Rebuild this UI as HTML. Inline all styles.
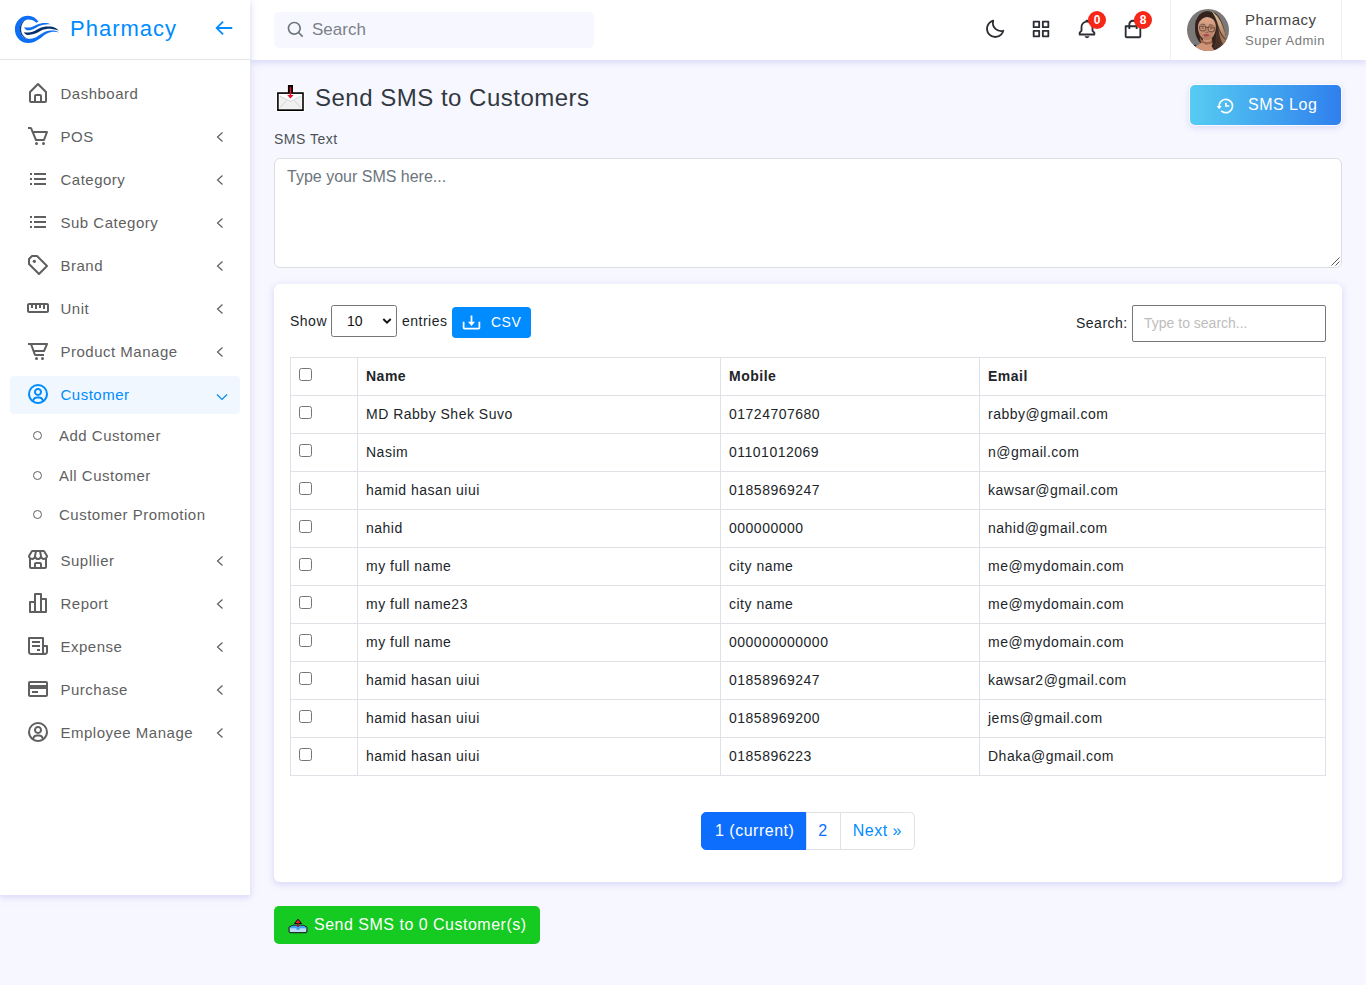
<!DOCTYPE html>
<html lang="en">
<head>
<meta charset="utf-8">
<title>Send SMS to Customers</title>
<style>
*{box-sizing:border-box;}
html,body{margin:0;padding:0;}
body{width:1366px;height:985px;overflow:hidden;background:#f7f7ff;font-family:"Liberation Sans",sans-serif;font-size:14px;letter-spacing:.5px;color:#4c5258;position:relative;}
svg{display:block;}
/* ---------- sidebar ---------- */
.sidebar{position:absolute;left:0;top:0;width:250px;height:895px;background:#fff;box-shadow:0 2px 6px 0 rgba(218,218,253,.65),0 2px 6px 0 rgba(206,206,238,.54);z-index:5;}
.sb-head{position:absolute;left:0;top:0;width:250px;height:60px;border-bottom:1px solid #e4e4e4;}
.logo{position:absolute;left:10px;top:10px;}
.logo-text{position:absolute;left:70px;top:15px;font-size:22px;line-height:28px;letter-spacing:1px;color:#008cff;}
.toggle{position:absolute;left:212.800px;top:17.400px;}
.menu{position:absolute;left:0;top:72px;width:250px;margin:0;padding:0;list-style:none;}
.mi{position:absolute;left:10px;width:230px;height:38px;border-radius:4px;color:#5f5f5f;font-size:15px;}
.mi .ic{position:absolute;left:16px;top:5.600px;width:24px;height:24px;fill:#5f5f5f;}
.mi .tx{position:absolute;left:50.500px;top:9px;line-height:20px;white-space:nowrap;}
.mi .ch{position:absolute;left:204px;top:13px;width:12px;height:12px;}
.mi.active{background:#f0f7ff;color:#008cff;}
.mi.active .ic{fill:#008cff;}
.si{position:absolute;left:10px;width:230px;height:38px;color:#5f5f5f;font-size:15px;}
.si i{position:absolute;left:23px;top:14px;width:9px;height:9px;border:1.800px solid #5f5f5f;border-radius:50%;}
.si .tx{position:absolute;left:49px;top:9px;line-height:20px;white-space:nowrap;}
/* ---------- topbar ---------- */
.topbar{position:absolute;left:250px;top:0;width:1116px;height:60px;background:#fff;box-shadow:0 2px 6px 0 rgba(218,218,253,.65),0 2px 6px 0 rgba(206,206,238,.54);z-index:4;}
.search{position:absolute;left:24px;top:12px;width:320px;height:36px;background:#f7f7ff;border-radius:5px;}
.search svg{position:absolute;left:12.100px;top:7.800px;fill:#6c757d;}
.search span{position:absolute;left:38px;top:7px;font-size:17px;line-height:22px;color:#7b8188;letter-spacing:0;}
.tic{position:absolute;top:18.400px;width:22px;height:22px;fill:#2a2d33;}
.badge{position:absolute;top:11px;width:18px;height:18px;border-radius:50%;background:#f62718;color:#fff;font-size:12px;font-weight:bold;line-height:18px;text-align:center;letter-spacing:0;}
.userbox{position:absolute;left:920px;top:0;width:172px;height:60px;border-left:1px solid #f0f0f0;border-right:1px solid #f0f0f0;}
.avatar{position:absolute;left:16px;top:9px;width:42px;height:42px;border-radius:50%;overflow:hidden;}
.uname{position:absolute;left:74px;top:10px;font-size:15px;line-height:20px;color:#444;}
.urole{position:absolute;left:74px;top:32px;font-size:13px;line-height:18px;color:#787878;}
/* ---------- content ---------- */
.content{position:absolute;left:274px;top:60px;width:1068px;}
.title{position:absolute;left:41px;top:22px;font-size:24px;line-height:32px;color:#32393f;white-space:nowrap;letter-spacing:.5px;}
.emo{position:absolute;left:-2px;top:20px;}
.smslog{position:absolute;left:916px;top:25px;width:151px;height:40px;border-radius:5px;background:linear-gradient(to right,#56ccf2,#2f80ed);color:#fff;font-size:16px;box-shadow:0 0 0 1px rgba(255,255,255,.75),0 2px 6px 0 rgba(218,218,253,.65),0 2px 6px 0 rgba(206,206,238,.54);}
.smslog svg{position:absolute;left:24.500px;top:10.500px;fill:#fff;}
.smslog span{position:absolute;left:58px;top:9px;line-height:22px;white-space:nowrap;}
.lbl{position:absolute;left:0;top:70px;font-size:14px;line-height:18px;color:#4c5258;}
.ta{position:absolute;left:0;top:98px;width:1068px;height:110px;background:#fff;border:1px solid #dcdee2;border-radius:6px;}
.ta span{position:absolute;left:12px;top:7px;font-size:16px;line-height:22px;color:#6c757d;letter-spacing:0;}
.ta svg{position:absolute;right:1px;bottom:1px;}
.card{position:absolute;left:0;top:224px;width:1068px;height:598px;background:#fff;border-radius:6px;box-shadow:0 2px 6px 0 rgba(218,218,253,.65),0 2px 6px 0 rgba(206,206,238,.54);}
.t14{font-size:14px;color:#212529;line-height:18px;position:absolute;white-space:nowrap;}
.sel{position:absolute;left:57px;top:21px;width:66px;height:32px;border:1px solid #767676;border-radius:2.500px;background:#fff;}
.sel span{position:absolute;left:15px;top:6px;font-size:14px;line-height:18px;color:#111;letter-spacing:0;}
.sel svg{position:absolute;left:49px;top:8.800px;}
.csv{position:absolute;left:178px;top:23px;width:79px;height:31px;border-radius:4px;background:#008cff;color:#fff;font-size:14px;}
.csv svg{position:absolute;left:9px;top:5px;}
.csv span{position:absolute;left:39px;top:6px;line-height:18px;}
.sinput{position:absolute;left:858px;top:21px;width:194px;height:37px;border:1px solid #767676;border-radius:2px;background:#fff;}
.sinput span{position:absolute;left:11px;top:8px;font-size:14px;line-height:18px;color:#bdbdbd;letter-spacing:0;}
table{position:absolute;left:16px;top:73px;width:1035px;border-collapse:collapse;font-size:14px;color:#212529;table-layout:fixed;}
td,th{border:1px solid #dee2e6;height:38px;padding:0 8px 2px 8px;text-align:left;vertical-align:middle;white-space:nowrap;font-weight:normal;}
th{font-weight:bold;}
.cb{display:block;width:13px;height:13px;border:1px solid #767676;border-radius:2.5px;background:#fff;margin:-2px 0 0 0;}
.pager{position:absolute;left:427px;top:528px;height:38px;display:flex;font-size:16px;letter-spacing:.5px;}
.pager div{height:38px;line-height:36px;padding:0 12px;border:1px solid #dee2e6;margin-left:-1px;color:#0d6efd;background:#fff;white-space:nowrap;}
.pager div.cur{background:#0d6efd;border-color:#0d6efd;color:#fff;border-radius:5px 0 0 5px;margin-left:0;padding-left:13px;}
.pager div.two{padding-left:11px;}
.pager div.last{border-radius:0 5px 5px 0;}
.send{position:absolute;left:0;top:846px;width:266px;height:38px;border-radius:5px;background:#15ca20;color:#fff;font-size:16px;}
.send svg{position:absolute;left:8px;top:4px;}
.send span{position:absolute;left:40px;top:8px;line-height:22px;white-space:nowrap;}
</style>
</head>
<body>
<!-- SIDEBAR -->
<div class="sidebar">
  <div class="sb-head">
    <svg class="logo" width="56" height="40" viewBox="0 0 56 40">
      <path d="M28.500 11.700C26 7.800 22.300 5.700 18 5.700 10.600 5.700 4.900 11.700 4.900 19.300 4.900 27 10.600 33 18 33c4.900 0 8.600-2 12.700-5.100 2.900-2.300 4.500-3.900 6.200-4.500 3.600-1.900 8.500-2.200 12.700-.900-2.700-1.700-6.100-2.300-8.600-2-3.800.100-6.800 1.500-10.300 3.700-3.100 2.100-6.700 4.700-12.200 4.700-4.900 0-8.700-4-8.700-9.600 0-5.500 3.700-9.700 8.200-9.700 3.300 0 6.200 1.200 8.200 3.100z" fill="#0d6ff5"/>
      <path d="M19.500 28.900C13.800 29.100 9.700 24.900 9.700 19.300c0-4.600 2.600-8.400 6.500-9.500-3.100 1.600-5.100 5-5.100 9.500 0 5.200 3.600 9.200 8.400 9.600z" fill="#073b86"/>
      <path d="M14.100 17.200c1.200 2.300 2.500 3.100 4.400 3.100 2.200 0 4.100-.700 6.100-1.800 2.200-1.200 4-2.400 6.100-3.100 1.800-.600 3.600-.900 5.400-1 1.500-.100 2.900-.100 4.300 0-1-.700-2.200-1.100-3.500-1.300-1.300-.100-2.700-.100-4.100 0-1.400.200-2.800.500-4.100 1-1.400.500-2.700 1.100-4.100 1.700-1.500.700-3 1.300-4.600 1.600-1.900.300-3.900.200-5.900-.200z" fill="#0d6ff5"/>
      <path d="M13.900 22.300c1.100 2.100 2.400 2.800 4.100 2.700 2.400-.100 4.500-.500 6.600-1.200 2.200-.800 4.200-2 6.100-3.100 2-1.100 4-1.600 6.200-1.800 2.100-.100 4.100 0 6.100.300 2 .300 4 .700 5.800 1.300-1.100-1.200-2.300-2.100-3.700-2.700-1.300-.600-2.700-1-4.100-1.200-1.700-.200-3.500-.200-5.300 0-1.700.200-3.400.600-5.100 1.200-2.100.800-4.100 2-6.100 3.100-1.800.900-3.600 1.400-5.500 1.600-1.700.100-3.400.100-5.100-.200z" fill="#04306e"/>
    </svg>
    <div class="logo-text">Pharmacy</div>
    <svg class="toggle" width="22" height="22" viewBox="0 0 24 24" fill="#008cff"><path d="M21 11H6.414l5.293-5.293-1.414-1.414L2.586 12l7.707 7.707 1.414-1.414L6.414 13H21z"/></svg>
  </div>
  <div class="mi" style="top:75px;"><svg class="ic" viewBox="0 0 24 24"><path d="M5 22h14a2 2 0 0 0 2-2v-9a1 1 0 0 0-.29-.71l-8-8a1 1 0 0 0-1.410 0l-8 8A1 1 0 0 0 3 11v9a2 2 0 0 0 2 2zm5-2v-5h4v5zm-5-8.590 7-7 7 7V20h-3v-5a2 2 0 0 0-2-2h-4a2 2 0 0 0-2 2v5H5z"/></svg><span class="tx">Dashboard</span></div>
  <div class="mi" style="top:118px;"><svg class="ic" viewBox="0 0 24 24"><path d="M21.822 7.431A1 1 0 0 0 21 7H7.333L6.179 4.230A1.994 1.994 0 0 0 4.333 3H2v2h2.333l4.744 11.385A1 1 0 0 0 10 17h8c.417 0 .790-.259.937-.648l3-8a1 1 0 0 0-.115-.921zM17.307 15h-6.640l-2.500-6h11.390l-2.250 6z"/><circle cx="10.500" cy="19.500" r="1.500"/><circle cx="17.500" cy="19.500" r="1.500"/></svg><span class="tx">POS</span><svg class="ch" viewBox="0 0 12 12"><path d="M8.500 1.500 3.500 6l5 4.500" fill="none" stroke="#5f5f5f" stroke-width="1.200"/></svg></div>
  <div class="mi" style="top:161px;"><svg class="ic" viewBox="0 0 24 24"><path d="M4 6h2v2H4zm0 5h2v2H4zm0 5h2v2H4zm16-8V6H8.023v2H18.800zM8 11h12v2H8zm0 5h12v2H8z"/></svg><span class="tx">Category</span><svg class="ch" viewBox="0 0 12 12"><path d="M8.500 1.500 3.500 6l5 4.500" fill="none" stroke="#5f5f5f" stroke-width="1.200"/></svg></div>
  <div class="mi" style="top:204px;"><svg class="ic" viewBox="0 0 24 24"><path d="M4 6h2v2H4zm0 5h2v2H4zm0 5h2v2H4zm16-8V6H8.023v2H18.800zM8 11h12v2H8zm0 5h12v2H8z"/></svg><span class="tx">Sub Category</span><svg class="ch" viewBox="0 0 12 12"><path d="M8.500 1.500 3.500 6l5 4.500" fill="none" stroke="#5f5f5f" stroke-width="1.200"/></svg></div>
  <div class="mi" style="top:247px;"><svg class="ic" viewBox="0 0 24 24"><path d="M11.707 2.293A.997.997 0 0 0 11 2H6a.997.997 0 0 0-.707.293l-3 3A.996.996 0 0 0 2 6v5c0 .266.105.520.293.707l10 10a.997.997 0 0 0 1.414 0l8-8a.999.999 0 0 0 0-1.414l-10-10zM13 19.586l-9-9V6.414L6.414 4h4.172l9 9L13 19.586z"/><circle cx="8.353" cy="8.353" r="1.647"/></svg><span class="tx">Brand</span><svg class="ch" viewBox="0 0 12 12"><path d="M8.500 1.500 3.500 6l5 4.500" fill="none" stroke="#5f5f5f" stroke-width="1.200"/></svg></div>
  <div class="mi" style="top:290px;"><svg class="ic" viewBox="0 0 24 24"><path d="M20.875 7H3.125C1.953 7 1 7.897 1 9v6c0 1.103.953 2 2.125 2h17.750C22.047 17 23 16.103 23 15V9c0-1.103-.953-2-2.125-2zM21 15H3V9h2v3h2V9h2v4h2V9h2v3h2V9h2v4h2V9h2v6z"/></svg><span class="tx">Unit</span><svg class="ch" viewBox="0 0 12 12"><path d="M8.500 1.500 3.500 6l5 4.500" fill="none" stroke="#5f5f5f" stroke-width="1.200"/></svg></div>
  <div class="mi" style="top:333px;"><svg class="ic" viewBox="0 0 24 24"><path d="M21 4H2v2h2.300l3.521 9.683A2.004 2.004 0 0 0 9.700 17H18v-2H9.700l-.728-2H18c.400 0 .762-.238.919-.606l3-7A.998.998 0 0 0 21 4zm-3.659 7H8.244L6.426 6h13.057l-2.142 5z"/><circle cx="10.500" cy="19.500" r="1.500"/><circle cx="16.500" cy="19.500" r="1.500"/></svg><span class="tx">Product Manage</span><svg class="ch" viewBox="0 0 12 12"><path d="M8.500 1.500 3.500 6l5 4.500" fill="none" stroke="#5f5f5f" stroke-width="1.200"/></svg></div>
  <div class="mi active" style="top:376px;"><svg class="ic" viewBox="0 0 24 24"><path d="M12 2A10.130 10.130 0 0 0 2 12a10 10 0 0 0 4 7.920V20h.100a9.700 9.700 0 0 0 11.800 0h.100v-.080A10 10 0 0 0 22 12 10.130 10.130 0 0 0 12 2zM8.070 18.930A3 3 0 0 1 11 16.570h2a3 3 0 0 1 2.930 2.360 7.750 7.750 0 0 1-7.860 0zm9.540-1.290A5 5 0 0 0 13 14.570h-2a5 5 0 0 0-4.610 3.070A8 8 0 0 1 4 12a8.100 8.100 0 0 1 8-8 8.100 8.100 0 0 1 8 8 8 8 0 0 1-2.390 5.640z"/><path d="M12 6a3.910 3.910 0 0 0-4 4 3.910 3.910 0 0 0 4 4 3.910 3.910 0 0 0 4-4 3.910 3.910 0 0 0-4-4zm0 6a1.910 1.910 0 0 1-2-2 1.910 1.910 0 0 1 2-2 1.910 1.910 0 0 1 2 2 1.910 1.910 0 0 1-2 2z"/></svg><span class="tx">Customer</span><svg class="ch" viewBox="0 0 12 12" style="left:206px;top:15px;"><path d="M1 3.500 6 8.500l5-5" fill="none" stroke="#008cff" stroke-width="1.200"/></svg></div>
  <div class="mi" style="top:542px;"><svg class="ic" viewBox="0 0 24 24"><path d="M19.148 2.971A2.008 2.008 0 0 0 17.434 2H6.566c-.698 0-1.355.372-1.714.971L2.143 7.485A.995.995 0 0 0 2 8a3.970 3.970 0 0 0 1 2.618V19c0 1.103.897 2 2 2h14c1.103 0 2-.897 2-2v-8.382A3.970 3.970 0 0 0 22 8a.995.995 0 0 0-.143-.515l-2.709-4.514zm.836 5.280A2.003 2.003 0 0 1 18 10c-1.103 0-2-.897-2-2 0-.068-.025-.128-.039-.192l.020-.004L15.220 4h2.214l2.550 4.251zM10.819 4h2.361l.813 4.065C13.958 9.137 13.080 10 12 10s-1.958-.863-1.993-1.935L10.819 4zM6.566 4H8.780l-.760 3.804.020.004C8.025 7.872 8 7.932 8 8c0 1.103-.897 2-2 2a2.003 2.003 0 0 1-1.984-1.749L6.566 4zM10 19v-3h4v3h-4zm6 0v-3c0-1.103-.897-2-2-2h-4c-1.103 0-2 .897-2 2v3H5v-7.142c.321.083.652.142 1 .142a3.990 3.990 0 0 0 3-1.357c.733.832 1.807 1.357 3 1.357s2.267-.525 3-1.357A3.990 3.990 0 0 0 18 12c.348 0 .679-.059 1-.142V19h-3z"/></svg><span class="tx">Supllier</span><svg class="ch" viewBox="0 0 12 12"><path d="M8.500 1.500 3.500 6l5 4.500" fill="none" stroke="#5f5f5f" stroke-width="1.200"/></svg></div>
  <div class="mi" style="top:585px;"><svg class="ic" viewBox="0 0 24 24"><path d="M20 7h-4V3a1 1 0 0 0-1-1H9a1 1 0 0 0-1 1v7H4a1 1 0 0 0-1 1v10a1 1 0 0 0 1 1h16a1 1 0 0 0 1-1V8a1 1 0 0 0-1-1zM8 20H5v-8h3v8zm6 0h-4V4h4v16zm5 0h-3V9h3v11z"/></svg><span class="tx">Report</span><svg class="ch" viewBox="0 0 12 12"><path d="M8.500 1.500 3.500 6l5 4.500" fill="none" stroke="#5f5f5f" stroke-width="1.200"/></svg></div>
  <div class="mi" style="top:628px;"><svg class="ic" viewBox="0 0 24 24"><path d="M21 11h-3V4a1 1 0 0 0-1-1H3a1 1 0 0 0-1 1v14c0 1.654 1.346 3 3 3h14c1.654 0 3-1.346 3-3v-6a1 1 0 0 0-1-1zM5 19a1 1 0 0 1-1-1V5h12v13c0 .351.061.688.171 1H5zm15-1a1 1 0 0 1-2 0v-5h2v5z"/><path d="M6 7h8v2H6zm0 4h8v2H6zm5 4h3v2h-3z"/></svg><span class="tx">Expense</span><svg class="ch" viewBox="0 0 12 12"><path d="M8.500 1.500 3.500 6l5 4.500" fill="none" stroke="#5f5f5f" stroke-width="1.200"/></svg></div>
  <div class="mi" style="top:671px;"><svg class="ic" viewBox="0 0 24 24"><path d="M20 4H4c-1.103 0-2 .897-2 2v12c0 1.103.897 2 2 2h16c1.103 0 2-.897 2-2V6c0-1.103-.897-2-2-2zM4 6h16v2H4V6zm0 12v-6h16.001l.001 6H4z"/><path d="M6 14h6v2H6z"/></svg><span class="tx">Purchase</span><svg class="ch" viewBox="0 0 12 12"><path d="M8.500 1.500 3.500 6l5 4.500" fill="none" stroke="#5f5f5f" stroke-width="1.200"/></svg></div>
  <div class="mi" style="top:714px;"><svg class="ic" viewBox="0 0 24 24"><path d="M12 2A10.130 10.130 0 0 0 2 12a10 10 0 0 0 4 7.920V20h.100a9.700 9.700 0 0 0 11.800 0h.100v-.080A10 10 0 0 0 22 12 10.130 10.130 0 0 0 12 2zM8.070 18.930A3 3 0 0 1 11 16.570h2a3 3 0 0 1 2.930 2.360 7.750 7.750 0 0 1-7.860 0zm9.540-1.290A5 5 0 0 0 13 14.570h-2a5 5 0 0 0-4.610 3.070A8 8 0 0 1 4 12a8.100 8.100 0 0 1 8-8 8.100 8.100 0 0 1 8 8 8 8 0 0 1-2.390 5.640z"/><path d="M12 6a3.910 3.910 0 0 0-4 4 3.910 3.910 0 0 0 4 4 3.910 3.910 0 0 0 4-4 3.910 3.910 0 0 0-4-4zm0 6a1.910 1.910 0 0 1-2-2 1.910 1.910 0 0 1 2-2 1.910 1.910 0 0 1 2 2 1.910 1.910 0 0 1-2 2z"/></svg><span class="tx">Employee Manage</span><svg class="ch" viewBox="0 0 12 12"><path d="M8.500 1.500 3.500 6l5 4.500" fill="none" stroke="#5f5f5f" stroke-width="1.200"/></svg></div>
  <div class="si" style="top:417px;"><i></i><span class="tx">Add Customer</span></div>
  <div class="si" style="top:457px;"><i></i><span class="tx">All Customer</span></div>
  <div class="si" style="top:496px;"><i></i><span class="tx">Customer Promotion</span></div>
</div>
<!-- TOPBAR -->
<div class="topbar">
  <div class="search">
    <svg width="20" height="20" viewBox="0 0 24 24"><path d="M10 18a7.952 7.952 0 0 0 4.897-1.688l4.396 4.396 1.414-1.414-4.396-4.396A7.952 7.952 0 0 0 18 10c0-4.411-3.589-8-8-8s-8 3.589-8 8 3.589 8 8 8zm0-14c3.309 0 6 2.691 6 6s-2.691 6-6 6-6-2.691-6-6 2.691-6 6-6z"/></svg>
    <span>Search</span>
  </div>
  <svg class="tic" style="left:734px;" viewBox="0 0 24 24"><path d="M20.742 13.045a8.088 8.088 0 0 1-2.077.271c-2.135 0-4.140-.830-5.646-2.336a8.025 8.025 0 0 1-2.064-7.723A1 1 0 0 0 9.730 2.034a10.014 10.014 0 0 0-4.489 2.582c-3.898 3.898-3.898 10.243 0 14.143a9.937 9.937 0 0 0 7.072 2.930 9.930 9.930 0 0 0 7.070-2.929 10.007 10.007 0 0 0 2.583-4.491 1.001 1.001 0 0 0-1.224-1.224zm-2.772 4.301a7.947 7.947 0 0 1-5.656 2.343 7.953 7.953 0 0 1-5.658-2.344c-3.118-3.119-3.118-8.195 0-11.314a7.923 7.923 0 0 1 2.060-1.483 10.027 10.027 0 0 0 2.890 7.848 9.972 9.972 0 0 0 7.848 2.891 8.036 8.036 0 0 1-1.484 2.059z"/></svg>
  <svg class="tic" style="left:780px;" viewBox="0 0 24 24"><path d="M10 3H4a1 1 0 0 0-1 1v6a1 1 0 0 0 1 1h6a1 1 0 0 0 1-1V4a1 1 0 0 0-1-1zM9 9H5V5h4v4zm11-6h-6a1 1 0 0 0-1 1v6a1 1 0 0 0 1 1h6a1 1 0 0 0 1-1V4a1 1 0 0 0-1-1zm-1 6h-4V5h4v4zm-9 4H4a1 1 0 0 0-1 1v6a1 1 0 0 0 1 1h6a1 1 0 0 0 1-1v-6a1 1 0 0 0-1-1zm-1 6H5v-4h4v4zm11-6h-6a1 1 0 0 0-1 1v6a1 1 0 0 0 1 1h6a1 1 0 0 0 1-1v-6a1 1 0 0 0-1-1zm-1 6h-4v-4h4v4z"/></svg>
  <svg class="tic" style="left:826px;" viewBox="0 0 24 24"><path d="M19 13.586V10c0-3.217-2.185-5.927-5.145-6.742C13.562 2.520 12.846 2 12 2s-1.562.520-1.855 1.258C7.185 4.074 5 6.783 5 10v3.586l-1.707 1.707A.996.996 0 0 0 3 16v2a1 1 0 0 0 1 1h16a1 1 0 0 0 1-1v-2a.996.996 0 0 0-.293-.707L19 13.586zM19 17H5v-.586l1.707-1.707A.996.996 0 0 0 7 14v-4c0-2.757 2.243-5 5-5s5 2.243 5 5v4c0 .266.105.520.293.707L19 16.414V17zm-7 5a2.980 2.980 0 0 0 2.818-2H9.182A2.980 2.980 0 0 0 12 22z"/></svg>
  <svg class="tic" style="left:872px;" viewBox="0 0 24 24"><path d="M5 22h14c1.103 0 2-.897 2-2V9a1 1 0 0 0-1-1h-3V7c0-2.757-2.243-5-5-5S7 4.243 7 7v1H4a1 1 0 0 0-1 1v11c0 1.103.897 2 2 2zM9 7c0-1.654 1.346-3 3-3s3 1.346 3 3v1H9V7zm-4 3h2v2h2v-2h6v2h2v-2h2l.002 10H5V10z"/></svg>
  <div class="badge" style="left:838px;">0</div>
  <div class="badge" style="left:884px;">8</div>
  <div class="userbox">
    <div class="avatar"><svg width="42" height="42" viewBox="0 0 42 42"><defs><filter id="bl" x="-10%" y="-10%" width="120%" height="120%"><feGaussianBlur stdDeviation=".75"/></filter>
      <linearGradient id="fg" x1="0" y1="0" x2="0" y2="1"><stop offset="0" stop-color="#dda98c"/><stop offset=".55" stop-color="#cd9377"/><stop offset="1" stop-color="#b07a5f"/></linearGradient>
      <linearGradient id="hl" x1="0" y1="0" x2="1" y2="1"><stop offset="0" stop-color="#ecd3b3"/><stop offset=".5" stop-color="#d9b28c"/><stop offset="1" stop-color="#a07456"/></linearGradient>
      <linearGradient id="hr" x1="0" y1="0" x2="1" y2="0"><stop offset="0" stop-color="#2f1f1a"/><stop offset=".6" stop-color="#4a3228"/><stop offset="1" stop-color="#7a5641"/></linearGradient></defs>
      <rect width="42" height="42" fill="#7b7978"/>
      <g filter="url(#bl)">
      <path d="M8.500 25C6.800 12 12 2.300 20 2.300c8 0 12 5.500 16 15.500 2 6 4 10 3 14-2 6-7 9.500-12 9C21 40 11 36 8.500 25z" fill="#35241e"/>
      <path d="M4 42c3-4 8-6 11.500-9.500l1-4.500h8c.5 6 1.500 10 4.500 15z" fill="#cf9576"/>
      <path d="M12.800 28c1.800 3.400 4.600 5.200 7.600 5.200 2 0 3.800-.9 5-2.600l-.6 3.800-5.400 1.300-5.800-2.800z" fill="#9a674e"/>
      <path d="M10.800 17c0-6 3.500-9 8.700-9 5.500 0 9.300 3.500 9.300 10 0 6-2.800 13-8.800 13-6.200 0-9.200-7.600-9.200-14z" fill="url(#fg)"/>
      <path d="M8.600 12c-1.200 8 .4 15 4.400 20-1.500-6-2.200-10-2-14C11.200 13 14 9.800 19 8c4-1 7.500.3 9.500 3.500l1-5.500-8.500-3.700-8.500 3.200z" fill="#35241e"/>
      <path d="M23 4c5 3 6.800 9 6.600 17-.2 7-2.200 12-5.100 16l2.500 4c6 .5 11-4 12.200-10.500C38.500 20 33.500 6 27 3.500z" fill="url(#hr)"/>
      <path d="M24.800 2.600c5.400 3.300 8.800 9 10.800 14.800 1.800 5 4 9.500 3.900 12.800-3.800-2.800-6.400-7.700-8.200-13.700-1.600-5.400-3.400-9.800-6.500-13.900z" fill="url(#hl)" opacity=".92"/>
      <path d="M31.500 19c1.500 6 4.500 10.500 8 12.500L38 37c-3.500-3.500-6-10-6.500-18z" fill="#a97c5e" opacity=".9"/>
      <path d="M29.500 24c1 5 .5 10-2 15" stroke="#5a4034" stroke-width="1.200" fill="none" opacity=".5"/>
      <path d="M12.600 17.200h6.200v3.800c-1.800 1.500-4.800 1.300-6-.4zM21.200 17.800l6.200.5-.3 3.700c-1.800 1.500-4.700 1-6-.6z" fill="none" stroke="#553b2f" stroke-width=".9"/>
      <path d="M18.800 18.200l2.400.3M13.500 15.800c1.500-.8 3.200-.8 4.700-.2M21.800 16.200c1.600-.5 3.300-.3 4.700.5" stroke="#553b2f" stroke-width=".8" fill="none"/>
      <ellipse cx="15.800" cy="19" rx="1.300" ry=".55" fill="#4a3a34"/><ellipse cx="24.200" cy="19.700" rx="1.300" ry=".55" fill="#4a3a34"/>
      <ellipse cx="20" cy="23.300" rx="1.700" ry=".7" fill="#99664e"/>
      <ellipse cx="19.300" cy="26.200" rx="2.900" ry="1.250" fill="#a6475b"/>
      <path d="M6.800 36.300l1.600-.9.900 1.700-1.700 1z" fill="#1c1614"/>
      </g></svg></div>
    <div class="uname">Pharmacy</div>
    <div class="urole">Super Admin</div>
  </div>
</div>
<!-- CONTENT -->
<div class="content">
  <svg class="emo" width="40" height="36" viewBox="0 0 40 36">
    <path d="M5.100 12.300h10.800V5.100h5.100v7.200h10.800v18.600H5.100z" fill="none" stroke="#fff" stroke-width="2.200" stroke-linejoin="round"/>
    <path d="M5.100 12.300h10.800V5.100h5.100v7.200h10.800v18.600H5.100z" fill="#000"/>
    <rect x="6.700" y="13.900" width="23.500" height="15.400" fill="#fff"/>
    <path d="M7.300 16.200l11.100 5.400 11.200-5.400v12.500H7.300z" fill="#f0f0f0"/>
    <path d="M7.900 16.100l10.500 5.400 10.500-5.400M7.900 27.600l6.700-7.100M28.900 27.600l-6.600-7.100" fill="none" stroke="#d0d0d0" stroke-width=".9"/>
    <rect x="17.700" y="6.800" width="1.500" height="9" fill="#e8112d"/>
    <path d="M15.100 15.100h6.600l-3.300 3.300z" fill="#e8112d"/>
  </svg>
  <div class="title">Send SMS to Customers</div>
  <div class="smslog">
    <svg width="20" height="20" viewBox="0 0 24 24"><path d="M12 8v5h5v-2h-3V8z"/><path d="M21.292 8.497a8.957 8.957 0 0 0-1.928-2.862 9.004 9.004 0 0 0-4.550-2.452 9.090 9.090 0 0 0-3.626 0 8.965 8.965 0 0 0-4.552 2.453 9.048 9.048 0 0 0-1.928 2.860A8.963 8.963 0 0 0 4 12l.002.025H2L5 16l3-3.975H6.002L6 12a6.957 6.957 0 0 1 1.195-3.913 7.066 7.066 0 0 1 1.891-1.892 7.034 7.034 0 0 1 2.503-1.054 7.003 7.003 0 0 1 8.269 5.445 7.117 7.117 0 0 1 0 2.824 6.936 6.936 0 0 1-1.054 2.503c-.25.371-.537.720-.854 1.036a7.058 7.058 0 0 1-2.225 1.501 6.980 6.980 0 0 1-1.313.408 7.117 7.117 0 0 1-2.823 0 6.957 6.957 0 0 1-2.501-1.053 7.066 7.066 0 0 1-1.037-.855l-1.414 1.414A8.985 8.985 0 0 0 13 21a9.050 9.050 0 0 0 3.503-.707 9.009 9.009 0 0 0 3.959-3.260A8.968 8.968 0 0 0 22 12a8.928 8.928 0 0 0-.708-3.503z"/></svg>
    <span>SMS Log</span>
  </div>
  <div class="lbl">SMS Text</div>
  <div class="ta"><span>Type your SMS here...</span>
    <svg width="10" height="10" viewBox="0 0 10 10"><path d="M9.5 1.500 1.500 9.500M9.500 5.500 5.500 9.500" stroke="#555" stroke-width="1" fill="none"/></svg>
  </div>
  <div class="card">
    <div class="t14" style="left:16px;top:28px;">Show</div>
    <div class="sel"><span>10</span><svg width="12" height="12" viewBox="0 0 12 12"><path d="M2.300 4l3.700 3.700L9.700 4" fill="none" stroke="#111" stroke-width="1.900"/></svg></div>
    <div class="t14" style="left:128px;top:28px;">entries</div>
    <div class="csv"><svg width="21" height="21" viewBox="0 0 24 24" fill="#fff"><path d="m12 16 4-5h-3V4h-2v7H8z"/><path d="M20 18H4v-7H2v7c0 1.103.897 2 2 2h16c1.103 0 2-.897 2-2v-7h-2v7z"/></svg><span>CSV</span></div>
    <div class="t14" style="left:802px;top:30px;">Search:</div>
    <div class="sinput"><span>Type to search...</span></div>
    <table><colgroup><col style="width:67px"><col style="width:363px"><col style="width:259px"><col style="width:346px"></colgroup>
    <tr><th><i class="cb"></i></th><th>Name</th><th>Mobile</th><th>Email</th></tr>
    <tr><td><i class="cb"></i></td><td>MD Rabby Shek Suvo</td><td>01724707680</td><td>rabby@gmail.com</td></tr>
    <tr><td><i class="cb"></i></td><td>Nasim</td><td>01101012069</td><td>n@gmail.com</td></tr>
    <tr><td><i class="cb"></i></td><td>hamid hasan uiui</td><td>01858969247</td><td>kawsar@gmail.com</td></tr>
    <tr><td><i class="cb"></i></td><td>nahid</td><td>000000000</td><td>nahid@gmail.com</td></tr>
    <tr><td><i class="cb"></i></td><td>my full name</td><td>city name</td><td>me@mydomain.com</td></tr>
    <tr><td><i class="cb"></i></td><td>my full name23</td><td>city name</td><td>me@mydomain.com</td></tr>
    <tr><td><i class="cb"></i></td><td>my full name</td><td>000000000000</td><td>me@mydomain.com</td></tr>
    <tr><td><i class="cb"></i></td><td>hamid hasan uiui</td><td>01858969247</td><td>kawsar2@gmail.com</td></tr>
    <tr><td><i class="cb"></i></td><td>hamid hasan uiui</td><td>01858969200</td><td>jems@gmail.com</td></tr>
    <tr><td><i class="cb"></i></td><td>hamid hasan uiui</td><td>0185896223</td><td>Dhaka@gmail.com</td></tr>
    </table>
    <div class="pager"><div class="cur">1 (current)</div><div class="two">2</div><div class="last" style="color:#008cff">Next »</div></div>
  </div>
  <div class="send"><svg width="32" height="28" viewBox="0 0 32 28">
    <path d="M10.900 15.300h10.300l3.700 1.800v4.900l-.9.700H8l-.9-.7v-4.900z" fill="#b9dcf1" stroke="#0a0a14" stroke-width="1" stroke-linejoin="round"/>
    <path d="M11 15.800h10.100l3.300 1.600v.8H7.600v-.8z" fill="#41a6f2"/>
    <path d="M14.100 18.100h3.800a1.900 1.900 0 0 1-3.800 0z" fill="#3d9be6"/>
    <path d="M16 9.100l3.500 4.400h-7z" fill="#ef1a2d" stroke="#0a0a0a" stroke-width="1" stroke-linejoin="round"/>
    <rect x="15.100" y="13.300" width="1.800" height="3.600" fill="#b30f23"/>
  </svg><span>Send SMS to 0 Customer(s)</span></div>
</div>
</body>
</html>
